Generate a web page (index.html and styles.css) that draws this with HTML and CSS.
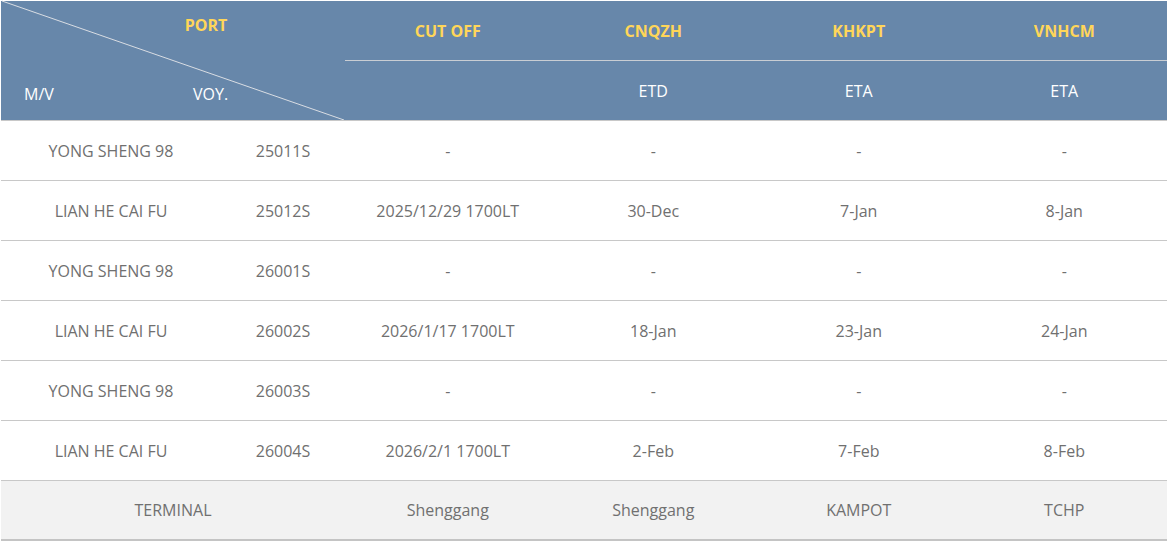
FILE: index.html
```html
<!DOCTYPE html>
<html>
<head>
<meta charset="utf-8">
<link rel="stylesheet" href="styles.css">
</head>
<body>
<table class="sched">
  <colgroup>
    <col class="c-mv"><col class="c-voy"><col class="c-d"><col class="c-d"><col class="c-d"><col class="c-d">
  </colgroup>
  <thead>
    <tr class="h1">
      <th class="corner" colspan="2" rowspan="2">
        <div class="corner-box">
          <svg class="diag" width="345" height="120" viewBox="0 0 345 120"><line x1="2" y1="1" x2="344" y2="120" stroke="#d9dde3" stroke-width="1"/></svg>
          <span class="port">PORT</span>
          <div class="corner-bottom"><span class="mv">M/V</span><span class="voy">VOY.</span></div>
        </div>
      </th>
      <th class="yel">CUT OFF</th>
      <th class="yel">CNQZH</th>
      <th class="yel">KHKPT</th>
      <th class="yel">VNHCM</th>
    </tr>
    <tr class="h2">
      <th></th>
      <th>ETD</th>
      <th>ETA</th>
      <th>ETA</th>
    </tr>
  </thead>
  <tbody>
    <tr><td>YONG SHENG 98</td><td>25011S</td><td>-</td><td>-</td><td>-</td><td>-</td></tr>
    <tr><td>LIAN HE CAI FU</td><td>25012S</td><td>2025/12/29 1700LT</td><td>30-Dec</td><td>7-Jan</td><td>8-Jan</td></tr>
    <tr><td>YONG SHENG 98</td><td>26001S</td><td>-</td><td>-</td><td>-</td><td>-</td></tr>
    <tr><td>LIAN HE CAI FU</td><td>26002S</td><td>2026/1/17 1700LT</td><td>18-Jan</td><td>23-Jan</td><td>24-Jan</td></tr>
    <tr><td>YONG SHENG 98</td><td>26003S</td><td>-</td><td>-</td><td>-</td><td>-</td></tr>
    <tr><td>LIAN HE CAI FU</td><td>26004S</td><td>2026/2/1 1700LT</td><td>2-Feb</td><td>7-Feb</td><td>8-Feb</td></tr>
    <tr class="term"><td colspan="2">TERMINAL</td><td>Shenggang</td><td>Shenggang</td><td>KAMPOT</td><td>TCHP</td></tr>
  </tbody>
</table>
</body>
</html>
```
FILE: styles.css
```css
html, body {
  margin: 0;
  padding: 0;
  background: #fff;
}
body {
  padding: 1px 0 0 1px;
  font-family: "Open Sans", "Noto Sans", sans-serif;
}
.sched {
  width: 1166px;
  border-collapse: collapse;
  table-layout: fixed;
  font-size: 16px;
}
.c-mv { width: 220px; }
.c-voy { width: 124px; }
.c-d { width: 205.5px; }

thead th {
  background: #6787aa;
  color: #fff;
  font-weight: normal;
  padding: 0;
  text-align: center;
}
.h1 th { height: 59px; }
.h1 th.yel {
  color: #ffd659;
  font-weight: bold;
  border-bottom: 1px solid #c9cdd3;
}
.h2 th { height: 59px; border-bottom: 1px solid #c8c8c8; }

.corner {
  border-bottom: 1px solid #c8c8c8;
}
.corner-box {
  position: relative;
  height: 119px;
  display: flex;
  flex-direction: column;
  justify-content: space-between;
}
.diag {
  position: absolute;
  left: -1px;
  top: -1px;
}
.port {
  color: #ffd659;
  font-weight: bold;
  margin-top: 13px;
  padding-left: 66px;
}
.corner-bottom {
  display: flex;
  padding-left: 23px;
  margin-bottom: 15px;
  text-align: left;
}
.mv { width: 169px; }

tbody td {
  height: 59px;
  padding: 0;
  text-align: center;
  color: #707070;
  border-bottom: 1px solid #c8c8c8;
}
tbody tr.term td {
  background: #f2f2f2;
  height: 58px;
  border-bottom: 2px solid #c4c4c4;
}
```
